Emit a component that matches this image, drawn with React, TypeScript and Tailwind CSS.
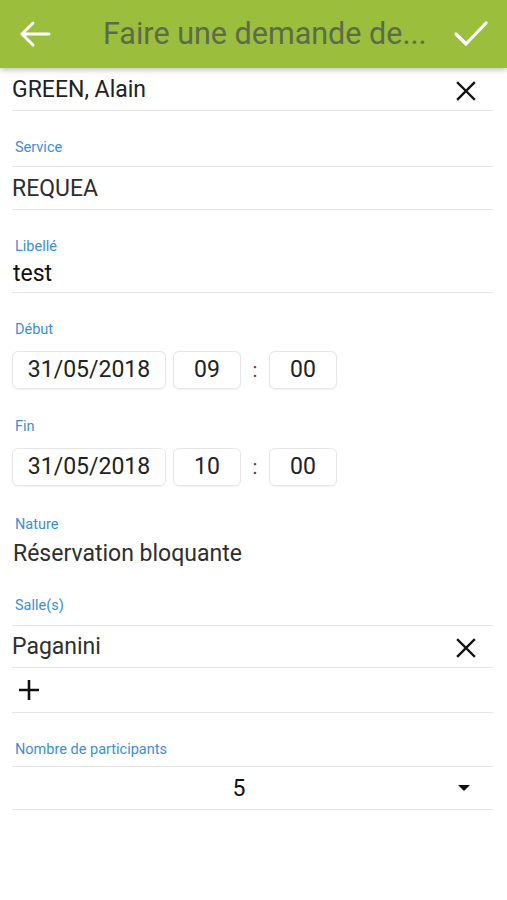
const Label = ({ children, className = "" }: { children: React.ReactNode; className?: string }) => (
  <div className={`text-[14.5px] leading-4 text-[#3b8ed8] pl-[3px] ${className}`}>{children}</div>
);

const Cross = () => (
  <svg width="22" height="22" viewBox="0 0 22 22" className="mr-[16px]">
    <path d="M3 3 L19 19 M19 3 L3 19" stroke="#111" strokeWidth="2.4" strokeLinecap="square" />
  </svg>
);

const Box = ({ value, className = "" }: { value: string; className?: string }) => (
  <div
    className={`h-[38px] flex items-center justify-center rounded-[6px] border border-[#e6e6e6] shadow-[0_1px_2px_rgba(0,0,0,0.06)] text-[23px] text-[#222] ${className}`}
  >
    {value}
  </div>
);

const DateTimeRow = ({ date, hour, minute }: { date: string; hour: string; minute: string }) => (
  <div className="flex items-center">
    <Box value={date} className="w-[154px]" />
    <Box value={hour} className="w-[68px] ml-[7px]" />
    <div className="w-[28px] text-center text-[20px] text-[#444]">:</div>
    <Box value={minute} className="w-[68px]" />
  </div>
);

export default function App() {
  return (
    <div className="w-[507px] h-[900px] bg-white font-['Roboto',sans-serif] overflow-hidden">
      <div className="h-[68px] bg-[#9bbe3c] flex items-center shadow-[0_2px_6px_rgba(0,0,0,0.25)] relative z-10">
        <svg width="34" height="30" viewBox="0 0 34 30" className="ml-[18px]">
          <path d="M31 15 H4 M15 4 L4 15 L15 26" stroke="#fff" strokeWidth="3" fill="none" strokeLinecap="round" strokeLinejoin="round" />
        </svg>
        <div className="ml-[51px] text-[30.5px] text-[#5d6b4d] whitespace-nowrap leading-none">Faire une demande de...</div>
        <svg width="36" height="30" viewBox="0 0 36 30" className="ml-auto mr-[18px]">
          <path d="M3 15 L13 25 L33 4" stroke="#fff" strokeWidth="3.2" fill="none" strokeLinecap="round" strokeLinejoin="round" />
        </svg>
      </div>

      <div className="pl-[12px] pr-[14px] text-[#222]">
        <div className="h-[43px] flex items-center justify-between border-b border-[#e4e4e4] text-[23px] pt-[3px]">
          <span>GREEN, Alain</span>
          <Cross />
        </div>

        <Label className="h-[56px] pt-[29px] border-b border-[#e4e4e4]">Service</Label>
        <div className="h-[43px] flex items-center border-b border-[#e4e4e4] text-[23px] text-[#2e2e2e] pt-[3px]">REQUEA</div>

        <Label className="h-[45px] pt-[29px]">Libellé</Label>
        <div className="h-[38px] flex items-center border-b border-[#e4e4e4] text-[23px] text-[#111] pl-px pt-[2px]">test</div>

        <Label className="pt-[29px] mb-[13px]">Début</Label>
        <DateTimeRow date="31/05/2018" hour="09" minute="00" />

        <Label className="pt-[30px] mb-[13px]">Fin</Label>
        <DateTimeRow date="31/05/2018" hour="10" minute="00" />

        <Label className="pt-[31px]">Nature</Label>
        <div className="h-[40px] flex items-center text-[23px] text-[#2e2e2e] pl-px pt-[2px]">Réservation bloquante</div>

        <Label className="h-[53px] pt-[25px] border-b border-[#e4e4e4]">Salle(s)</Label>
        <div className="h-[42px] flex items-center justify-between border-b border-[#e4e4e4] text-[23px] text-[#2e2e2e] pt-[2px]">
          <span>Paganini</span>
          <Cross />
        </div>
        <div className="h-[45px] flex items-center border-b border-[#e4e4e4]">
          <svg width="24" height="24" viewBox="0 0 24 24" className="ml-[5px]">
            <path d="M12 2 V22 M2 12 H22" stroke="#111" strokeWidth="2.6" />
          </svg>
        </div>

        <Label className="h-[54px] pt-[29px] border-b border-[#e4e4e4]">Nombre de participants</Label>
        <div className="h-[43px] flex items-center border-b border-[#e4e4e4] text-[23px] text-[#111] pt-[2px]">
          <span className="flex-1 text-center pl-[8px]">5</span>
          <svg width="12" height="8" viewBox="0 0 12 8" className="mr-[23px]">
            <path d="M0 0 H12 L6 6 Z" fill="#111" />
          </svg>
        </div>
      </div>
    </div>
  );
}
